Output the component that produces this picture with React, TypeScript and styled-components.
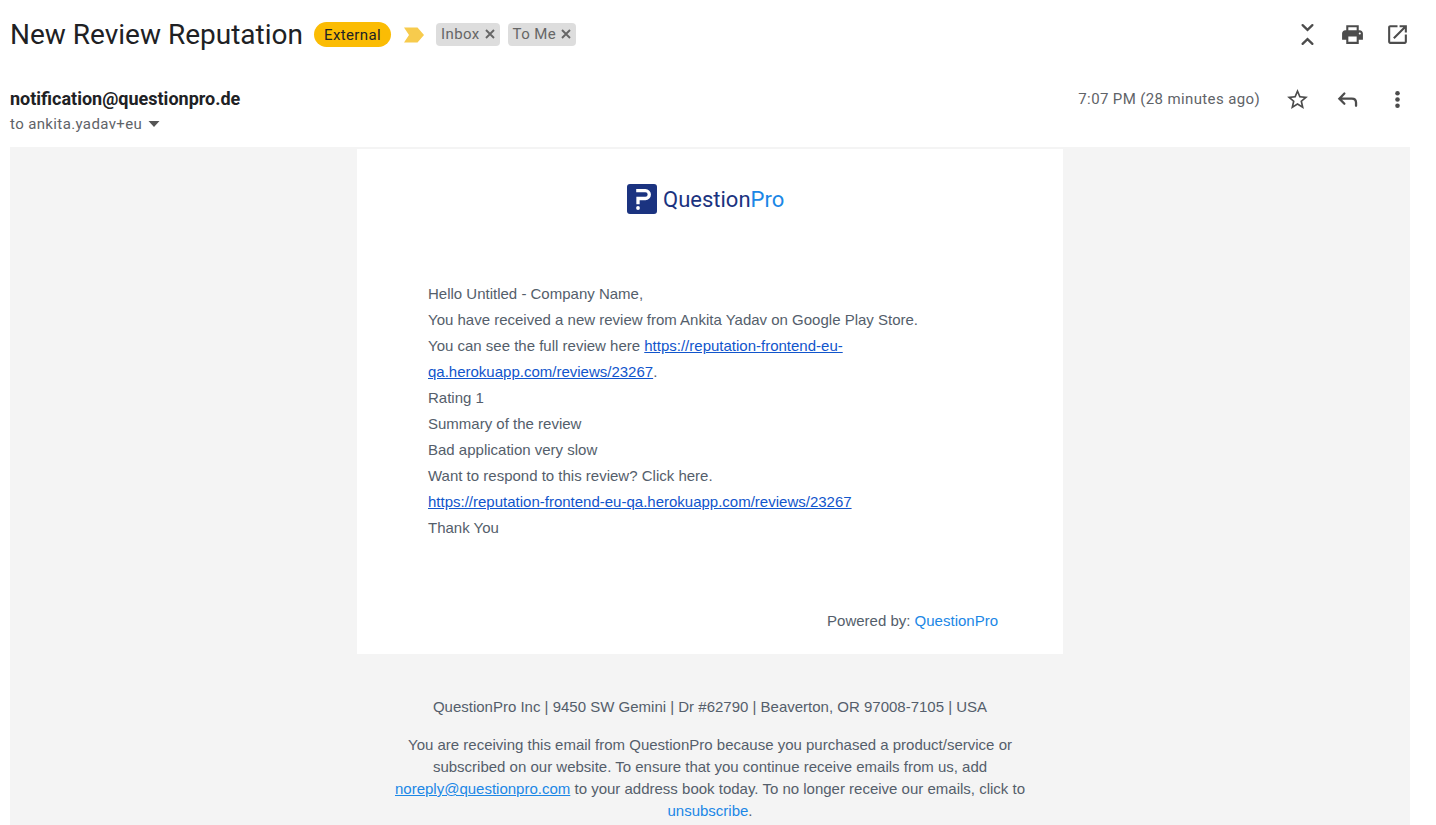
import React from "react";
import styled, { createGlobalStyle } from "styled-components";

const GlobalStyle = createGlobalStyle`
  *, *::before, *::after { box-sizing: border-box; }
  html, body, #root { height: 100%; }
  body { margin: 0; background: #fff; overflow: hidden; }
`;

const Page = styled.main`
  display: flex;
  flex-direction: column;
  min-height: 100%;
  padding: 0 26px 0 10px;
  font-family: Roboto, "Liberation Sans", sans-serif;
  font-size: 15px;
  color: #5f6368;
`;

const SubjectBar = styled.header`
  display: flex;
  align-items: center;
  height: 69px;
`;

const Subject = styled.h1`
  margin: 0 11px 0 0;
  font-size: 28px;
  line-height: 36px;
  font-weight: 400;
  color: #202124;
`;

const ExternalBadge = styled.span`
  height: 25px;
  padding: 0 10px;
  margin-right: 12px;
  border-radius: 13px;
  line-height: 26px;
  letter-spacing: 0.025em;
  color: #202124;
  background: #fbbc04;
`;

const Marker = styled.svg`
  display: block;
  width: 22px;
  height: 16px;
  margin-right: 11px;
`;

const Label = styled.span`
  display: flex;
  align-items: center;
  height: 23px;
  margin-right: 8px;
  padding: 0 5px 1px;
  border-radius: 4px;
  letter-spacing: 0.025em;
  color: #666;
  background: #ddd;
`;

const IconButton = styled.button`
  display: flex;
  align-items: center;
  justify-content: center;
  width: 25px;
  height: 25px;
  padding: 0;
  border: 0;
  background: none;
  color: #4c4c4c;
  cursor: pointer;

  svg { display: block; width: 100%; height: 100%; }
`;

const RemoveButton = styled(IconButton)`
  width: 10px;
  height: 10px;
  margin-left: 5px;
`;

const Actions = styled.div<{ $gap: number }>`
  display: flex;
  align-items: flex-end;
  gap: ${(p) => p.$gap}px;
  margin-left: auto;
`;

const SenderRow = styled.section`
  display: flex;
  align-items: flex-start;
  height: 78px;
  padding-top: 17px;
`;

const Sender = styled.h2`
  margin: 0;
  font-size: 18px;
  line-height: 26px;
  font-weight: 700;
  color: #202124;
`;

const Recipient = styled.div`
  display: flex;
  align-items: center;
  line-height: 24px;
  letter-spacing: 0.025em;
`;

const DetailsButton = styled(IconButton)`
  width: 12px;
  height: 6px;
  margin-left: 6px;
`;

const Time = styled.time`
  line-height: 26px;
  letter-spacing: 0.025em;
`;

const MailBody = styled.article`
  flex: 1;
  display: flex;
  flex-direction: column;
  align-items: center;
  padding-top: 2px;
  background: #f4f4f4;
  font-family: "Liberation Sans", Arial, sans-serif;
  color: #545e6b;
`;

const Card = styled.div`
  width: 100%;
  max-width: 706px;
  padding: 35px 65px 19px 71px;
  background: #fff;
`;

const Logo = styled.svg`
  display: block;
  width: 160px;
  height: 32px;
  margin: 0 auto 65px 199px;
`;

const Message = styled.div`
  line-height: 26px;

  p { margin: 0; max-width: 500px; }
  a { color: #15c; }
`;

const Powered = styled.p`
  margin: 66px 0 0;
  line-height: 28px;
  text-align: right;
`;

const BlueLink = styled.a<{ $plain?: boolean }>`
  color: #1b87e6;
  text-decoration: ${(p) => (p.$plain ? "none" : "underline")};
`;

const Footer = styled.footer`
  width: 100%;
  max-width: 650px;
  padding-top: 42px;
  line-height: 22px;
  text-align: center;

  p { margin: 0 0 16px; }
`;

const Icon = ({ children }: { children: React.ReactNode }) => (
  <svg viewBox="0 0 24 24" fill="currentColor" aria-hidden="true">{children}</svg>
);

const LineIcon = ({ children }: { children: React.ReactNode }) => (
  <svg viewBox="0 0 24 24" fill="none" stroke="currentColor" strokeWidth="2.2" strokeLinecap="round" aria-hidden="true">
    {children}
  </svg>
);

const Remove = ({ name }: { name: string }) => (
  <RemoveButton aria-label={`Remove label ${name}`}>
    <svg viewBox="0 0 10 10" fill="none" stroke="#666" strokeWidth="1.9" aria-hidden="true">
      <path d="M1 1l8 8M9 1l-8 8" />
    </svg>
  </RemoveButton>
);

export default function App() {
  return (
    <Page>
      <GlobalStyle />
      <SubjectBar>
        <Subject>New Review Reputation</Subject>
        <ExternalBadge>External</ExternalBadge>
        <Marker viewBox="0 0 22 16" aria-hidden="true">
          <path d="M1 .5h13.500L21 8l-6.500 7.500H1L6 8z" fill="#f7cb4d" />
        </Marker>
        <Label>Inbox<Remove name="Inbox" /></Label>
        <Label>To Me<Remove name="To Me" /></Label>
        <Actions $gap={20}>
          <IconButton aria-label="Collapse all">
            <LineIcon><path d="M7.300 3L12 7.600 16.700 3M7.300 21L12 16.400 16.700 21" /></LineIcon>
          </IconButton>
          <IconButton aria-label="Print all">
            <Icon><path fillRule="evenodd" d="M6 3h12v5h1c1.660 0 3 1.340 3 3v6h-4v4H6v-4H2v-6c0-1.660 1.340-3 3-3h1zm2 2v3h8V5zm0 9v5h8v-5zm11-4a1 1 0 100 2 1 1 0 000-2z" /></Icon>
          </IconButton>
          <IconButton aria-label="Open in new window">
            <Icon><path d="M19 19H5V5h7V3H5c-1.110 0-2 .9-2 2v14c0 1.100.89 2 2 2h14c1.100 0 2-.9 2-2v-7h-2v7zM14 3v2h3.590l-9.830 9.830 1.410 1.410L19 6.410V10h2V3h-7z" /></Icon>
          </IconButton>
        </Actions>
      </SubjectBar>

      <SenderRow>
        <div>
          <Sender>notification@questionpro.de</Sender>
          <Recipient>
            to ankita.yadav+eu
            <DetailsButton aria-label="Show details">
              <svg viewBox="0 0 12 6" fill="#555" aria-hidden="true"><path d="M.5 0h11L6 6z" /></svg>
            </DetailsButton>
          </Recipient>
        </div>
        <Actions $gap={25}>
          <Time>7:07 PM (28 minutes ago)</Time>
          <IconButton aria-label="Star">
            <Icon><path d="M22 9.240l-7.190-.62L12 2 9.190 8.630 2 9.240l5.460 4.730L5.820 21 12 17.270 18.180 21l-1.630-7.030L22 9.240zM12 15.400l-3.760 2.270 1-4.280-3.320-2.880 4.380-.38L12 6.100l1.710 4.040 4.380.38-3.320 2.880 1 4.280L12 15.400z" /></Icon>
          </IconButton>
          <IconButton aria-label="Reply">
            <LineIcon><path d="M9 6.300L4.200 11.200 9 16.100M4.600 11.200H16.200c2.400 0 4 1.500 4 3.900V18" /></LineIcon>
          </IconButton>
          <IconButton aria-label="More">
            <Icon><circle cx="12" cy="6" r="2.200" /><circle cx="12" cy="12" r="2.200" /><circle cx="12" cy="18" r="2.200" /></Icon>
          </IconButton>
        </Actions>
      </SenderRow>

      <MailBody>
        <Card>
          <Logo viewBox="0 0 160 32" role="img" aria-label="QuestionPro">
            <rect x="0" y="0" width="30" height="30" rx="3" fill="#1b3380" />
            <path d="M9.200 6.700H18.400a3.900 3.900 0 010 7.800H11V20.300" fill="none" stroke="#fff" strokeWidth="3.300" />
            <circle cx="11" cy="24" r="1.900" fill="#fff" />
            <text x="36" y="23" fontFamily="Roboto, sans-serif" fontSize="22" fill="#1b3380">Question<tspan fill="#1b87e6">Pro</tspan></text>
          </Logo>
          <Message>
            <p>Hello Untitled - Company Name,</p>
            <p>You have received a new review from Ankita Yadav on Google Play Store.</p>
            <p>
              You can see the full review here{" "}
              <a href="#review">https://reputation-frontend-eu-<wbr />qa.herokuapp.com/reviews/23267</a>.
            </p>
            <p>Rating 1</p>
            <p>Summary of the review</p>
            <p>Bad application very slow</p>
            <p>Want to respond to this review? Click here.</p>
            <p><a href="#review">https://reputation-frontend-eu-qa.herokuapp.com/reviews/23267</a></p>
            <p>Thank You</p>
          </Message>
          <Powered>Powered by: <BlueLink href="#questionpro" $plain>QuestionPro</BlueLink></Powered>
        </Card>
        <Footer>
          <p>QuestionPro Inc | 9450 SW Gemini | Dr #62790 | Beaverton, OR 97008-7105 | USA</p>
          <p>
            You are receiving this email from QuestionPro because you purchased a product/service or
            subscribed on our website. To ensure that you continue receive emails from us, add{" "}
            <BlueLink href="mailto:noreply@questionpro.com">noreply@questionpro.com</BlueLink> to your address
            book today. To no longer receive our emails, click to{" "}
            <BlueLink href="#unsubscribe" $plain>unsubscribe</BlueLink>.
          </p>
        </Footer>
      </MailBody>
    </Page>
  );
}
